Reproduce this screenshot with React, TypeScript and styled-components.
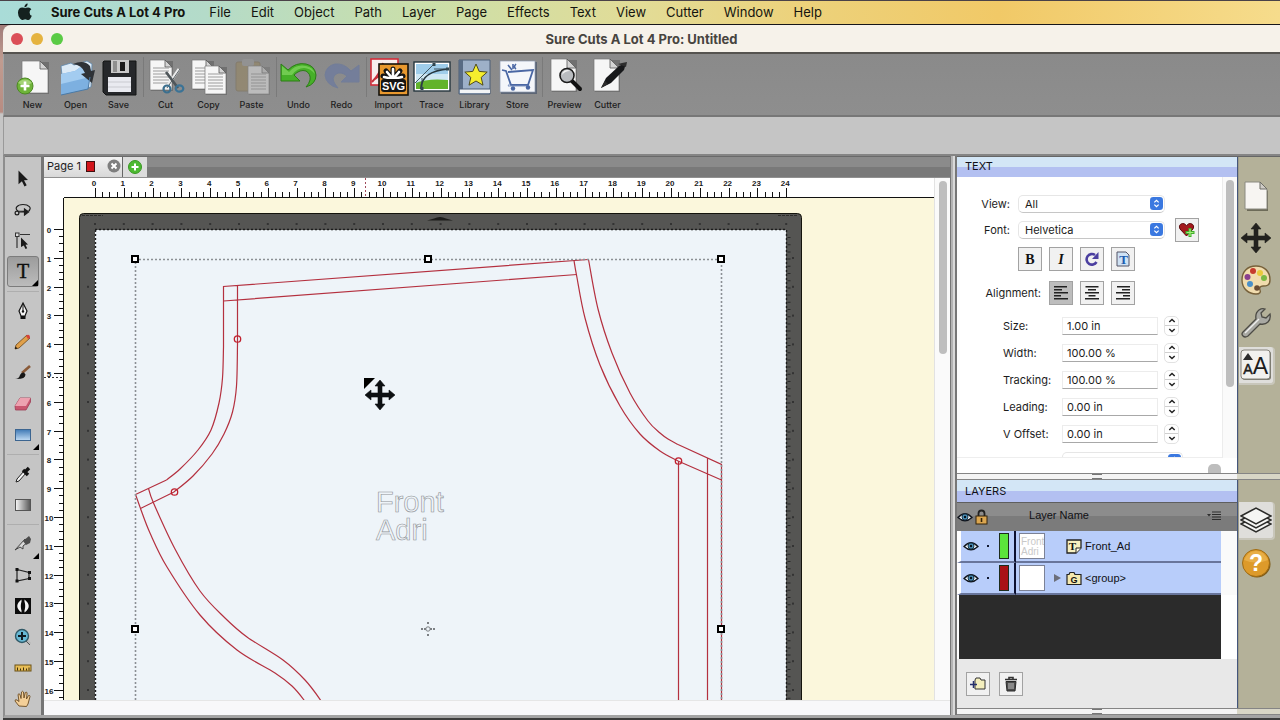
import React from 'react';
import styled, { createGlobalStyle, css } from 'styled-components';

const GlobalStyle = createGlobalStyle`
  * { box-sizing: border-box; }
  body { margin: 0; background: #8e8e8e; font-family: Inter, "Liberation Sans", sans-serif; color: #1c1c1c; }
  button { font: inherit; color: inherit; padding: 0; border: 0; background: none; }
  svg { display: block; }
`;

/* ---------- frame ---------- */

const Screen = styled.div`
  display: flex;
  flex-direction: column;
  height: 100vh;
  min-height: 640px;
  overflow: hidden;
  background: linear-gradient(#a07c78 25px, #c09c90 60px, #b78c82 112px, #c6c6c6 114px);
`;

const MenuBar = styled.nav`
  flex: none;
  display: flex;
  align-items: center;
  height: 25px;
  padding: 0 0 2px 17px;
  border-top: 1px solid #4a4248;
  border-bottom: 1px solid #16161a;
  background: linear-gradient(90deg, #a9dcd8 0%, #b4dbc9 16%, #c9dfab 32%, #e2dc97 50%, #ecd27c 62%, #f1c967 78%, #f6dc8c 100%);
`;

const AppleButton = styled.button`
  width: 15px;
  height: 18px;
  margin-right: 11px;
`;

const MenuItem = styled.button<{ $bold?: boolean }>`
  padding: 0 8px;
  margin-right: ${(p) => (p.$bold ? 8 : 4)}px;
  font-size: 13px;
  line-height: 20px;
  font-weight: ${(p) => (p.$bold ? 700 : 400)};
  color: #14140f;
  white-space: nowrap;
`;

const Window = styled.main`
  flex: 1;
  min-height: 0;
  display: flex;
  flex-direction: column;
  margin-left: 3px;
  border-radius: 8px 0 0 0;
  overflow: hidden;
  background: #8e8e8e;
  border-bottom: 2px solid #3c3c3c;
`;

const TitleBar = styled.header`
  flex: none;
  display: grid;
  grid-template-columns: 1fr auto 1fr;
  align-items: center;
  height: 29px;
  padding: 0 8px;
  background: #f6f2ea;
  border-bottom: 2px solid #55534f;
`;

const Lights = styled.div`
  display: flex;
  gap: 8px;
`;

const Light = styled.button<{ $color: string }>`
  width: 12px;
  height: 12px;
  border-radius: 50%;
  background: ${(p) => p.$color};
`;

const Title = styled.h1`
  margin: 0;
  font-size: 13px;
  line-height: 18px;
  font-weight: 700;
  color: #47443f;
`;

/* ---------- top toolbar ---------- */

const Toolbar = styled.div`
  flex: none;
  display: flex;
  height: 63px;
  padding: 3px 0 0 7px;
  border-left: 1px solid #a4a4a4;
  border-bottom: 2px solid #777;
  background: linear-gradient(#8a8a8a, #8e8e8e);
`;

const ToolGroup = styled.div`
  display: flex;
  & + & { margin-left: 4px; }
  & + &::before {
    content: '';
    width: 1px;
    height: 40px;
    margin-left: -1px;
    background: #7a7a7a;
  }
`;

const ToolbarButton = styled.button`
  display: flex;
  flex-direction: column;
  align-items: center;
  gap: 2px;
  width: 43px;
  font-size: 9px;
  line-height: 12px;
  font-weight: 500;
  color: #1e1e1e;
  &:disabled { color: #1e1e1e; }
`;

const OptionsBar = styled.div`
  flex: none;
  height: 39px;
  background: #c5c5c5;
  border-left: 1px solid #9a9a9a;
  border-bottom: 2px solid #858585;
`;

const Body = styled.div`
  flex: 1;
  min-height: 0;
  display: flex;
  border-left: 2px solid #8e8e8e;
  border-bottom: 3px solid #a4a4a4;
`;

/* ---------- left tools ---------- */

const ToolColumn = styled.div`
  flex: none;
  display: flex;
  flex-direction: column;
  align-items: center;
  width: 39px;
  padding-top: 6px;
  background: #c5c5c5;
  border-right: 3px solid #757575;
  border-top: 1px solid #777;
`;

const ToolButton = styled.button<{ $active?: boolean; $more?: boolean }>`
  position: relative;
  flex: none;
  display: grid;
  place-items: center;
  width: 32px;
  height: 31px;
  border-radius: 3px;
  ${(p) => p.$active && css`
    background: linear-gradient(#9c9c9c, #bcbcbc);
    border: 1px solid #7c7c7c;
  `}
  ${(p) => p.$more && css`
    &::after {
      content: '';
      position: absolute;
      right: 0;
      bottom: 0;
      border: 3px solid #000;
      border-left-color: transparent;
      border-top-color: transparent;
    }
  `}
`;

const ToolRule = styled.hr`
  flex: none;
  width: 32px;
  height: 1px;
  margin: 4px 0 3px;
  border: 0;
  background: #aeaeae;
`;

/* ---------- document ---------- */

const Document = styled.section`
  flex: 1;
  min-width: 0;
  display: flex;
  flex-direction: column;
  background: #f9f9fa;
`;

const TabStrip = styled.div`
  flex: none;
  display: flex;
  height: 22px;
  border-top: 1px solid #6a6a6a;
  border-bottom: 1px solid #909090;
  background: linear-gradient(#8b8b8b 50%, #797979 50%);
`;

const PageTab = styled.div`
  display: flex;
  align-items: center;
  width: 79px;
  padding: 0 0 2px 3px;
  border-right: 1px solid #666;
  background: linear-gradient(#f2f2f2, #d8d8d8);
`;

const TabName = styled.button`
  display: flex;
  align-items: center;
  gap: 5px;
  font-size: 11px;
  line-height: 16px;
  white-space: nowrap;
`;

const Swatch = styled.span`
  width: 9px;
  height: 11px;
  border: 1px solid #401010;
  background: #d2151b;
`;

const TabClose = styled.button`
  margin: 0 1px 0 auto;
`;

const TabAdd = styled.button`
  display: grid;
  place-items: center;
  width: 24px;
  background: #dcdcdc;
`;

const CanvasGrid = styled.div`
  flex: 1;
  min-height: 0;
  display: grid;
  grid-template-columns: 20px 1fr 16px;
  grid-template-rows: 20px 1fr 15px;
`;

const Corner = styled.div`
  background: #fff;
`;

const RulerTop = styled.div`
  min-width: 0;
  overflow: hidden;
  background: #fff;
  border-bottom: 1px solid #111;
`;

const RulerLeft = styled.div`
  min-height: 0;
  overflow: hidden;
  background: #fff;
  border-right: 1px solid #111;
`;

const Workspace = styled.div`
  min-width: 0;
  min-height: 0;
  overflow: hidden;
  background: #fbf7dc;
`;

const VScroll = styled.div`
  grid-column: 3;
  grid-row: 1 / span 2;
  display: flex;
  justify-content: center;
  padding-top: 3px;
  border-left: 1px solid #e2e2e2;
  background: #fafafa;
`;

const Thumb = styled.div<{ $h: number }>`
  width: 8px;
  height: ${(p) => p.$h}px;
  border-radius: 4px;
  background: #bebebe;
`;

const BottomTrack = styled.div`
  grid-column: 1 / -1;
  border-top: 1px solid #e6e6e6;
  background: #f8f8fa;
`;

const SplitBar = styled.div`
  flex: none;
  width: 7px;
  background: linear-gradient(90deg, #777 0 1px, #b4b4b4 1px 3px, #d9d9d9 3px 5px, #777 5px 7px);
`;

/* ---------- right docks ---------- */

const Docks = styled.aside`
  flex: none;
  display: flex;
  flex-direction: column;
  width: 323px;
  border-top: 1px solid #666;
`;

const Dock = styled.section<{ $grow?: boolean }>`
  display: grid;
  grid-template-columns: 281px 1fr;
  min-height: 0;
  flex: ${(p) => (p.$grow ? 1 : 'none')};
`;

const DockPanel = styled.div`
  display: flex;
  flex-direction: column;
  min-height: 0;
  border-right: 1px solid #44567c;
  background: #fff;
`;

const DockTitle = styled.h2<{ $tall?: boolean }>`
  flex: none;
  margin: 0;
  height: ${(p) => (p.$tall ? 22 : 20)}px;
  padding-left: 8px;
  font-size: 11px;
  line-height: ${(p) => (p.$tall ? 22 : 18)}px;
  font-weight: 400;
  color: #101018;
  background: linear-gradient(#d3e6f6 50%, #b3c0f1 50%);
`;

const DockRail = styled.div`
  display: flex;
  flex-direction: column;
  align-items: flex-start;
  padding-top: 18px;
  background: #b4b199;
  border-left: 1px solid #9e9c88;
`;

const RailButton = styled.button<{ $active?: boolean }>`
  display: grid;
  place-items: center;
  width: 34px;
  height: 42px;
  ${(p) => p.$active && css`
    width: 36px;
    height: 38px;
    margin: 4px 0 2px;
    background: #dfdedb;
    border-radius: 0 4px 4px 0;
    border-right: 2px solid #c8c6ba;
    border-bottom: 2px solid #c8c6ba;
  `}
`;

const Splitter = styled.div`
  flex: none;
  display: grid;
  grid-template-columns: 280px 1fr;
  height: 7px;
  border-top: 1px solid #858585;
  border-bottom: 1px solid #858585;
  background: #d8d6c6;
`;

const Grip = styled.div`
  display: grid;
  place-items: center;
  background: #f4f4f4;
  &::after {
    content: '';
    width: 10px;
    height: 3px;
    border-top: 1px solid #777;
    border-bottom: 1px solid #777;
  }
`;

const FormArea = styled.div`
  display: grid;
  grid-template-columns: 1fr 15px;
  height: 296px;
`;

const Form = styled.form`
  display: flex;
  flex-direction: column;
  height: 281px;
  padding-top: 14px;
  overflow: hidden;
  font-size: 11px;
  border-bottom: 1px solid #eee;
`;

const FormTrack = styled.div`
  display: flex;
  justify-content: center;
  padding-top: 3px;
  border-left: 1px solid #ececec;
  background: #fafafa;
`;

const HTrack = styled.div`
  grid-column: 1 / -1;
  display: flex;
  justify-content: flex-end;
  padding: 6px 16px 0 0;
  overflow: hidden;
`;

const HThumb = styled.div`
  width: 13px;
  height: 9px;
  border-radius: 5px 5px 0 0;
  background: #bdbdbd;
`;

const FormRow = styled.div<{ $h: number; $indent?: number }>`
  flex: none;
  display: flex;
  align-items: center;
  height: ${(p) => p.$h}px;
  padding-left: ${(p) => p.$indent ?? 0}px;
`;

const labelText = css`
  flex: none;
  line-height: 16px;
  white-space: nowrap;
`;

const MenuLabel = styled.label`
  ${labelText}
  width: 53px;
  margin-right: 8px;
  text-align: right;
`;

const GroupLabel = styled.span`
  ${labelText}
  width: 84px;
  margin-right: 8px;
  text-align: right;
`;

const FieldLabel = styled.label`
  ${labelText}
  width: 59px;
`;

const SelectBox = styled.div<{ $w: number }>`
  position: relative;
  width: ${(p) => p.$w}px;
  svg { position: absolute; right: 2px; top: 2px; pointer-events: none; }
`;

const Select = styled.select`
  appearance: none;
  display: block;
  width: 100%;
  height: 18px;
  padding: 0 6px;
  border: 1px solid #e6e6e6;
  border-bottom-color: #c6c6c6;
  border-radius: 5px;
  background: #fff;
  font: 11px/16px Inter, sans-serif;
  color: #1c1c1c;
`;

const SquareButton = styled.button<{ $active?: boolean }>`
  display: grid;
  place-items: center;
  width: 24px;
  height: 24px;
  border: 1px solid #a2a2a2;
  background: ${(p) => (p.$active ? '#bdbdbd' : '#f1f1f1')};
`;

const ButtonRow = styled.div`
  display: flex;
  gap: 7px;
`;

const HeartSlot = styled.div`
  margin-left: 10px;
`;

const NumberInput = styled.input`
  width: 96px;
  height: 18px;
  padding: 0 4px;
  border: 1px solid #ececec;
  border-bottom-color: #a8a8a8;
  background: #fff;
  font: 11px/16px Inter, sans-serif;
  color: #1c1c1c;
`;

const Stepper = styled.div`
  display: flex;
  flex-direction: column;
  width: 15px;
  height: 20px;
  margin-left: 6px;
  border: 1px solid #e2e2e2;
  border-radius: 5px;
`;

const StepButton = styled.button`
  flex: 1;
  display: grid;
  place-items: center;
  & + & { border-top: 1px solid #d0d0d0; }
`;

/* ---------- layers ---------- */

const LayerTable = styled.table`
  flex: none;
  width: 100%;
  table-layout: fixed;
  border-collapse: separate;
  border-spacing: 0;
  font: 11px/14px "Liberation Sans", Arial, sans-serif;
  color: #101014;
  td, th { padding: 0; font-weight: 400; text-align: left; }
`;

const Column = styled.col<{ $w?: number }>`
  width: ${(p) => (p.$w ? `${p.$w}px` : 'auto')};
`;

const HeadRow = styled.tr`
  height: 29px;
  background: linear-gradient(#5f5f5f 1px, #8c8c8c 1px 50%, #7b7b7b 50%);
`;

const HeadIcons = styled.div`
  display: flex;
  align-items: center;
  gap: 2px;
`;

const HeadName = styled.th`
  && { padding-left: 13px; padding-bottom: 3px; }
`;

const HeadNameBar = styled.div`
  display: flex;
  align-items: center;
  justify-content: space-between;
`;

const LayerRow = styled.tr`
  height: 32px;
  background: #b8cdfa;
`;

const Cell = styled.td`
  vertical-align: middle;
  border-bottom: 2px solid #68759b;
`;

const EyeCell = styled.td`
  vertical-align: middle;
  border-left: 4px solid #fff;
  border-bottom: 2px solid #68759b;
`;

const EyeToggle = styled.button`
  display: block;
  margin-left: 2px;
`;

const GutterCell = styled.td`
  background: #fafafa;
`;

const ColorCell = styled.td`
  vertical-align: middle;
  border-right: 2px solid #0c1030;
  border-bottom: 2px solid #68759b;
`;

const ColorBar = styled.div<{ $color: string }>`
  width: 10px;
  height: 26px;
  margin-left: 3px;
  border: 1px solid #1c2c1c;
  background: ${(p) => p.$color};
`;

const Dot = styled.div`
  width: 2px;
  height: 2px;
  margin-left: 3px;
  background: #101830;
`;

const Preview = styled.div`
  width: 26px;
  height: 26px;
  margin-left: 3px;
  overflow: hidden;
  border: 1px solid #7c8296;
  background: #fff;
  font: 10px/10px "Liberation Sans", Arial, sans-serif;
  color: #c9c9c9;
  padding: 3px 0 0 1px;
`;

const LayerName = styled.div`
  display: flex;
  align-items: center;
  gap: 3px;
  white-space: nowrap;
`;

const Twirl = styled.span`
  width: 13px;
  padding-left: 3px;
`;

const EmptyList = styled.div`
  flex: none;
  height: 64px;
  margin: 0 16px 0 2px;
  background: #2b2b2b;
`;

const LayerActions = styled.div`
  flex: 1;
  display: flex;
  gap: 9px;
  padding: 13px 9px 0;
  background: #e8e8e8;
`;

/* ---------- top toolbar icons (40 x 40) ---------- */

const Big = ({ children }: { children: React.ReactNode }) => (
  <svg width="40" height="40" viewBox="0 0 40 40" fill="none">{children}</svg>
);

const Sheet = ({ x, y, w, h, f = 7, lines }: { x: number; y: number; w: number; h: number; f?: number; lines?: boolean }) => (
  <g>
    <path d={`M${x + 1} ${y + 1}h${w}v${h}h${-w}z`} fill="#555" opacity=".5" />
    <path d={`M${x} ${y}h${w - f}l${f} ${f}v${h - f}h${-w}z`} fill="#f6f6f6" stroke="#777" strokeWidth=".7" />
    <path d={`M${x + w - f} ${y}v${f}h${f}z`} fill="#d4d4d4" stroke="#555" strokeWidth=".8" />
    {lines && <path d={[8, 11, 14, 17, 20, 23].map((d) => `M${x + 3} ${y + d}h${w - 6}`).join('')} stroke="#9c9c9c" strokeWidth="1" />}
  </g>
);

const NewIcon = () => (
  <Big>
    <Sheet x={9} y={4} w={26} h={32} f={8} />
    <circle cx="12" cy="29" r="8" fill="#6fb43a" stroke="#4c8a22" />
    <path d="M5 26a8 7 0 0 1 14 0q-7 4-14 0z" fill="#b9e08e" opacity=".7" />
    <path d="M12 24.500v9M7.500 29h9" stroke="#fff" strokeWidth="2.600" />
  </Big>
);

const OpenIcon = () => (
  <Big>
    <path d="M5 9l10-3 3 2 13-4 5 3-1 23-27 7z" fill="#dceaf6" stroke="#5d86ac" strokeWidth=".8" />
    <path d="M5 17l14-3 7-5 9 4-3 19-27 6z" fill="#7db0e0" />
    <path d="M5 17l14-3 7-5 9 4-1 7-29 7z" fill="#a3ccf0" />
    <path d="M17 7Q28 2 34 9l1 5 4-1-3 13-11-9 4-1q-3-8-12-9z" fill="#2e3237" />
    <path d="M5 38l27-6 2-12" stroke="#4b7aa6" />
  </Big>
);

const SaveIcon = () => (
  <Big>
    <path d="M5 4h32v34H7l-3-3V5z" fill="#26282b" stroke="#131415" />
    <rect x="12" y="3" width="18" height="13" fill="#c9c9c9" />
    <rect x="21" y="5" width="5" height="9" fill="#1b1b1b" />
    <path d="M14 4h4v11h-4z" fill="#8f8f8f" />
    <rect x="9" y="20" width="23" height="15" fill="#e9eaf0" />
    <path d="M9 25h23M9 30h23" stroke="#c9cad0" />
  </Big>
);

const CutIcon = () => (
  <Big>
    <Sheet x={4} y={3} w={22} h={30} lines />
    <path d="M33 12L20 31" stroke="#ececec" strokeWidth="3" />
    <path d="M34 12L21 31" stroke="#5c6468" strokeWidth="1" />
    <path d="M20 15l12 16" stroke="#4f565a" strokeWidth="2.600" />
    <circle cx="21" cy="32" r="3.500" stroke="#3b6f8e" strokeWidth="2.200" />
    <ellipse cx="33.500" cy="31.500" rx="3.800" ry="3.200" stroke="#3b7396" strokeWidth="2.200" />
  </Big>
);

const CopyIcon = () => (
  <Big>
    <Sheet x={3} y={3} w={21} h={29} lines />
    <Sheet x={16} y={9} w={21} h={28} lines />
  </Big>
);

const PasteIcon = () => (
  <Big>
    <g opacity=".45">
      <rect x="4" y="5" width="24" height="29" rx="2" fill="#9a8556" stroke="#7a6a48" />
      <rect x="10" y="2" width="12" height="7" rx="2" fill="#9c9c9c" />
      <Sheet x={16} y={9} w={21} h={28} lines />
    </g>
  </Big>
);

const UndoIcon = () => (
  <Big>
    <path d="M2 7v17h19l-6-6q6-6 12-4 5 3 4 9-1 4-4 7 10-3 10-12-1-9-10-11-10-2-18 6z" fill="#46b028" stroke="#2d7c17" strokeWidth="1" />
    <path d="M3 9l7 6Q17 7 27 9q7 1 9 8-5-6-11-6-7 0-12 7H3z" fill="#8ede6a" opacity=".6" />
  </Big>
);

const RedoIcon = () => (
  <Big>
    <path d="M37 8v17H19l6-6q-6-5-11-2-5 4-1 10l3 4Q4 28 3 18 4 9 13 7q9-1 16 7z" fill="#6878a2" stroke="#6677a0" opacity=".65" />
  </Big>
);

const ImportIcon = () => (
  <Big>
    <rect x="2" y="2" width="27" height="26" fill="#f6eded" stroke="#d22d3a" strokeWidth="1.600" />
    <path d="M3 25q8-8 11-19M6 22q6-6 20-4" stroke="#c52f3a" strokeWidth="2" />
    <rect x="10" y="7" width="29" height="31" fill="#e8982e" stroke="#15120c" strokeWidth="1.600" />
    <g stroke="#141414" strokeWidth="5" strokeLinecap="round">
      <path d="M24 22V12M24 22l-7-8M24 22l7-8M24 22l-10-3M24 22l10-3" />
    </g>
    <g stroke="#fff" strokeWidth="2.600" strokeLinecap="round">
      <path d="M24 22V12M24 22l-6-7M24 22l6-7M24 22l-9-2M24 22l9-2" />
    </g>
    <rect x="12" y="22" width="25" height="13" rx="3" fill="#141414" />
    <text x="24.500" y="33" textAnchor="middle" fontFamily="Liberation Sans, sans-serif" fontWeight="700" fontSize="11" fill="#fff">SVG</text>
  </Big>
);

const TraceIcon = () => (
  <Big>
    <rect x="2" y="5" width="36" height="29" fill="#fff" stroke="#26363e" strokeWidth="1.400" />
    <rect x="4" y="7" width="32" height="25" fill="#9fcdea" />
    <path d="M4 17h32v8H4z" fill="#cfe8f4" />
    <path d="M4 26q12-5 32-3v9H4z" fill="#62b32a" />
    <path d="M9 32q0-18 28-20" stroke="#26363e" strokeWidth="1.600" />
    <path d="M3 26L22 7M22 12h15M10 21v12" stroke="#33464f" strokeWidth=".9" />
    <path d="M20.500 6h3v3h-3zM34 10.500h3v3h-3zM8.500 30h3v3h-3z" fill="#33464f" />
  </Big>
);

const LibraryIcon = () => (
  <Big>
    <path d="M4 3h31v34H4z" fill="#9db0c8" stroke="#4d5f76" />
    <path d="M4 3h4v29H4z" fill="#586b84" />
    <path d="M5 32h30v4H5z" fill="#f2f4f6" />
    <path d="M4 32h31" stroke="#4d5f76" />
    <path d="M21 7l3.200 7.400 8 .7-6 5.300 1.800 7.800-7-4.200-7 4.200 1.800-7.800-6-5.300 8-.7z" fill="#f6ee2e" stroke="#4e4c20" strokeWidth="1" />
  </Big>
);

const StoreIcon = () => (
  <Big>
    <rect x="3" y="5" width="36" height="32" fill="#3e4c66" opacity=".6" />
    <rect x="2" y="4" width="35" height="31" fill="#f4f6fa" stroke="#8b97ae" strokeWidth=".7" />
    <path d="M4 13l4 1 5 14h17l5-15-25 2" stroke="#4a67a4" strokeWidth="1.800" />
    <path d="M12 26l-2 3h21" stroke="#7d93c0" strokeWidth="1" />
    <circle cx="15" cy="31.500" r="2.200" fill="#4a67a4" />
    <circle cx="30" cy="30.500" r="2.200" fill="#4a67a4" />
    <path d="M10 8l4 5M15 7v5M18 7q-3 3 0 5" stroke="#4a67a4" strokeWidth="1.600" />
  </Big>
);

const PreviewIcon = () => (
  <Big>
    <Sheet x={6} y={2} w={25} h={32} f={9} />
    <path d="M27 24l8 8" stroke="#111" strokeWidth="4" strokeLinecap="round" />
    <circle cx="22" cy="18.500" r="7" fill="#b9bcc0" stroke="#1c1c1c" strokeWidth="1.600" />
    <path d="M17 18a5 5 0 0 1 8-4q-5 0-8 4z" fill="#f2f2f2" />
  </Big>
);

const CutterIcon = () => (
  <Big>
    <Sheet x={6} y={2} w={25} h={32} f={9} />
    <path d="M13 31l5-10L31 9l7-3-2 7-13 13z" fill="#17181a" />
    <path d="M13 31l4-7 3 3zM30 7l4-1 5-1-1 5" fill="#2d2d2d" />
  </Big>
);

/* ---------- left tool icons (20 x 20) ---------- */

const Mid = ({ children }: { children: React.ReactNode }) => (
  <svg width="20" height="20" viewBox="0 0 20 20" fill="none">{children}</svg>
);

const tools: Record<string, React.ReactNode> = {
  Select: <path d="M5.500 1.500l9.500 9.500-4 .3 2.700 5-2.200 1.200-2.600-5.200-3.400 3z" fill="#1a1a1a" />,
  Lasso: <g stroke="#1e1e1e" strokeWidth="1.200"><path d="M5 11C1 8.500 4 4.500 10 4.500S19 8 16 10.500M5 11q9 1 12-.5" /><circle cx="4" cy="13" r="1.900" /><path d="M6 12l5 0M11.500 9v6l4-3z" fill="#1e1e1e" /></g>,
  'Edit points': <g><path d="M4 6v11M7 3.500h10" stroke="#333" strokeWidth="1.200" /><rect x="2.500" y="2" width="3.500" height="3.500" stroke="#333" fill="#ddd" /><path d="M8 6.500l7 7-2.500.2 1.700 3.600-1.700.8-1.700-3.700L8 16z" fill="#1a1a1a" /></g>,
  Text: <text x="10" y="15.500" textAnchor="middle" fontFamily="Liberation Serif, serif" fontSize="20" fill="#0e0e0e" stroke="#0e0e0e" strokeWidth=".4">T</text>,
  Pen: <g><path d="M10 2l4 8-2 5H8l-2-5z" fill="#f4f4f4" stroke="#111" strokeWidth="1.200" /><path d="M10 3v7" stroke="#111" /><circle cx="10" cy="10.500" r="1.200" fill="#111" /><path d="M7.500 15h5v3h-5z" fill="#111" /></g>,
  Pencil: <g><path d="M2 17l1-4L14 3l3 3L6 16z" fill="#e0a04a" stroke="#6b4518" strokeWidth=".8" /><path d="M14 3q3-1 3 3l-2 1-2-3z" fill="#d5443c" /><path d="M2 17l.5-2.500 2 2z" fill="#111" /></g>,
  Brush: <g><path d="M17 3l-8 7" stroke="#8a5a38" strokeWidth="2.600" /><path d="M2 16q4 0 5-4 1-3 4-2.500l1.500 2q0 5-10.500 4.500z" fill="#171717" /></g>,
  Eraser: <g><path d="M2 12l5-8h10.500v4L13 16H2.500z" fill="#c9566f" stroke="#9c3c54" strokeWidth=".8" /><path d="M7 4h10.500L13 12H2z" fill="#eda2b0" /></g>,
  Shape: <g><defs><linearGradient id="blue" x1="0" y1="0" x2="0" y2="1"><stop offset="0" stopColor="#3f79b5" /><stop offset="1" stopColor="#c2dcf4" /></linearGradient></defs><rect x="2.500" y="4.500" width="15" height="11" fill="url(#blue)" stroke="#3c6590" /></g>,
  Eyedropper: <g><path d="M3 18l1-3 7-8 2 2-7 8z" fill="#f5f5f5" stroke="#222" /><path d="M10 6l5 5M12 8l4-4" stroke="#111" strokeWidth="3.400" /></g>,
  Gradient: <g><defs><linearGradient id="grey" x1="0" y1="0" x2="1" y2="0"><stop offset="0" stopColor="#fafafa" /><stop offset="1" stopColor="#555" /></linearGradient></defs><rect x="2.500" y="4.500" width="15" height="11" fill="url(#grey)" stroke="#555" /></g>,
  Knife: <g><path d="M2 16L12 5l3 3-5 4v3l-3-2z" fill="#d8d8d8" stroke="#444" /><path d="M10 7l6-5 2 3-1 4-4 2z" fill="#4c4c4c" /></g>,
  Distort: <g><path d="M4 4.500l12 3v6L4 16z" stroke="#222" strokeWidth="1.200" /><path d="M2.500 3h3v3h-3zM15 6h3v3h-3zM15 12h3v3h-3zM2.500 14.500h3v3h-3z" fill="#111" /></g>,
  Split: <g><rect x="2" y="2" width="16" height="16" fill="#0c0c0c" /><path d="M8.500 3.500Q0 10 8.500 16.500zM11.500 3.500Q20 10 11.500 16.500z" fill="#f4f4f4" /><ellipse cx="10" cy="10" rx="2.200" ry="4.500" fill="#0c0c0c" /></g>,
  Zoom: <g><path d="M12 12l5 5" stroke="#b8b8b8" strokeWidth="3" /><path d="M13 14l4 4" stroke="#555" /><circle cx="9" cy="9" r="6.500" fill="#67b8d4" stroke="#305866" strokeWidth="1.400" /><path d="M9 5v8M5 9h8" stroke="#101a20" strokeWidth="2" /></g>,
  Measure: <g><rect x="2" y="7" width="16" height="6" fill="#e7bd56" stroke="#6d5216" /><path d="M4.500 9.500v3M7.500 10.500v2M10.500 9.500v3M13.500 10.500v2M16 9.500v3" stroke="#3f2f0c" /></g>,
  Hand: <path d="M6 17l-4-5q0-2 2-1l2 1.500L5 5.500q1-1.500 2 0l1 4L8.500 3q1-1.500 2 0l.5 6 1.300-5.500q1.500-1 1.800.5L13.500 10l2-3.500q1.500-.5 1.500 1L15 15l-1.500 2.500z" fill="#f3cf98" stroke="#6b4b20" strokeWidth=".9" />,
};

const toolGroups: string[][] = [
  ['Select', 'Lasso', 'Edit points', 'Text'],
  ['Pen', 'Pencil', 'Brush', 'Eraser', 'Shape'],
  ['Eyedropper', 'Gradient'],
  ['Knife', 'Distort', 'Split', 'Zoom', 'Measure', 'Hand'],
];
const withMore = ['Text', 'Shape', 'Knife'];

/* ---------- other small icons ---------- */

const AppleLogo = () => (
  <svg width="15" height="18" viewBox="1 1 13 16" fill="#14211f">
    <path d="M10.300 1.500q.1 1.400-.8 2.400-.9 1-2.100.9-.1-1.300.8-2.300.9-1 2.100-1zM13.600 6.600q-1.600 1-1.600 2.800 0 2.100 2 3-.5 1.400-1.400 2.600-.8 1.100-1.700 1.100-.6 0-1.300-.3-.7-.4-1.500-.4t-1.500.4q-.7.300-1.200.3-.9 0-1.900-1.300Q1.700 12.500 1.700 9.600q0-2.100 1.100-3.400 1.100-1.300 2.700-1.300.8 0 1.600.4.600.3.900.3.300 0 1-.3.900-.4 1.800-.4 1.800 0 2.800 1.700z" />
  </svg>
);

const SelectKnob = () => (
  <svg width="13" height="13" viewBox="0 0 12 12">
    <rect width="12" height="12" rx="3" fill="#3a78e0" />
    <path d="M4 5l2-2 2 2M4 7l2 2 2-2" fill="none" stroke="#fff" strokeWidth="1.100" />
  </svg>
);

const Chevron = ({ up }: { up?: boolean }) => (
  <svg width="8" height="5" viewBox="0 0 8 5">
    <path d={up ? 'M1.300 4L4 1.500 6.700 4' : 'M1.300 1L4 3.500 6.700 1'} fill="none" stroke="#222" strokeWidth="1.500" />
  </svg>
);

const EyeIcon = () => (
  <svg width="16" height="10" viewBox="0 0 16 10">
    <path d="M1 5.500Q8-2 15 5.500 8 12 1 5.500z" fill="#f2f8fc" stroke="#10141c" strokeWidth="1.300" />
    <circle cx="8" cy="5" r="3" fill="#4b90b8" stroke="#1b3a50" />
    <circle cx="8" cy="5" r="1.200" fill="#081018" />
  </svg>
);

const LockIcon = () => (
  <svg width="13" height="16" viewBox="0 0 13 16">
    <path d="M3.500 8V4.500Q3.500 1.500 6.500 1.500t3 3V8" fill="none" stroke="#222" strokeWidth="1.800" />
    <rect x="1" y="7" width="11" height="8" fill="#dba650" stroke="#33230a" />
    <path d="M6.500 9v4" stroke="#33230a" strokeWidth="1.600" />
  </svg>
);

const AlignIcon = ({ mode }: { mode: 'left' | 'center' | 'right' }) => {
  const widths = [13, 8, 14, 7, 14];
  return (
    <svg width="14" height="14" viewBox="0 0 14 14">
      {widths.map((w, i) => (
        <rect key={i} x={mode === 'left' ? 0 : mode === 'right' ? 14 - w : (14 - w) / 2} y={i * 3} width={w} height="1.500" fill="#222" />
      ))}
    </svg>
  );
};

const Rail = ({ children }: { children: React.ReactNode }) => (
  <svg width="32" height="32" viewBox="0 0 32 32" fill="none">{children}</svg>
);

const MoveArrows = ({ fill }: { fill: string }) => (
  <path d="M16 1l5 6h-3v7h7v-3l6 5-6 5v-3h-7v7h3l-5 6-5-6h3v-7H7v3l-6-5 6-5v3h7V7h-3z" fill={fill} stroke={fill} strokeWidth=".6" />
);

/* ---------- drawing ---------- */

const UNIT = 28.8;
const quarters = (n: number) => Array.from({ length: n * 4 + 1 }, (_, i) => i);

type Point = [number, number];

/* Catmull-Rom spline through the points, as cubic segments. */
const smooth = (pts: Point[]) =>
  pts.slice(1).reduce((d, p, i) => {
    const a = pts[Math.max(i - 1, 0)];
    const b = pts[i];
    const c = pts[Math.min(i + 2, pts.length - 1)];
    return `${d}C${b[0] + (p[0] - a[0]) / 6} ${b[1] + (p[1] - a[1]) / 6} ${p[0] - (c[0] - b[0]) / 6} ${p[1] - (c[1] - b[1]) / 6} ${p[0]} ${p[1]}`;
  }, `M${pts[0][0]} ${pts[0][1]}`);

const outlines = [
  'M223.500 347V286.500L588.500 259.500M223.500 301L577 274.500M237.500 345V285.500',
  'M166.500 480L135.500 494.500L140.500 508.500L174 492',
  'M678 444.500L721.500 464.500V720M678 461L721.500 480M678.500 461V720M707.500 458.500V720',
  smooth([[223.5, 347], [222.5, 378], [219, 403], [211, 430], [198, 450], [180, 469], [166.5, 480]]),
  smooth([[237.5, 345], [236.5, 386], [232.5, 412], [224, 434], [212, 454], [193, 476], [174, 492]]),
  smooth([[140.5, 508.5], [150, 533], [167, 567], [200, 615], [237, 650], [275, 673], [292, 686], [304, 700], [310, 710]]),
  smooth([[148.5, 488.5], [153.5, 503], [175, 549], [200, 591], [225, 618], [247, 637], [283, 660], [305, 680], [320.5, 700], [326, 710]]),
  smooth([[574, 260.5], [576.5, 275], [585, 318], [600, 365], [620, 406], [640, 434], [660, 451], [678, 461]]),
  smooth([[588.5, 259.5], [598, 309], [612, 353], [630, 393], [648, 421], [660, 433], [668, 439], [678, 444.5]]),
];

const handles: Point[] = [[135, 259], [428, 259], [721, 259], [135, 629], [721, 629]];
const notches: Point[] = [[237.5, 339], [174.5, 492], [678.5, 461]];

const TopRuler = () => (
  <svg width="100%" height="19">
    <g fontFamily="Liberation Sans, sans-serif" fontWeight="700" fontSize="8" textAnchor="middle" fill="#222">
      {quarters(24).map((i) => (
        <line key={i} x1={Math.round(31 + (i * UNIT) / 4) + 0.5} x2={Math.round(31 + (i * UNIT) / 4) + 0.5} y1={i % 4 ? 14 : 10} y2="19" stroke="#111" />
      ))}
      {Array.from({ length: 25 }, (_, i) => <text key={i} x={30 + i * UNIT} y="8">{i}</text>)}
    </g>
    <path d="M301.500 0v19" stroke="#a04a5a" strokeDasharray="2 2" />
  </svg>
);

const LeftRuler = () => (
  <svg width="19" height="100%">
    <g fontFamily="Liberation Sans, sans-serif" fontWeight="700" fontSize="8" textAnchor="middle" fill="#222">
      {quarters(17).map((i) => (
        <line key={i} y1={Math.round(31 + (i * UNIT) / 4) + 0.5} y2={Math.round(31 + (i * UNIT) / 4) + 0.5} x1={i % 4 ? 15 : 10} x2="19" stroke="#111" />
      ))}
      {Array.from({ length: 17 }, (_, i) => <text key={i} x="5" y={35 + i * UNIT}>{i}</text>)}
    </g>
    <path d="M0 179.500h19" stroke="#333" strokeDasharray="2 2" />
  </svg>
);

const Drawing = () => (
  <svg width="100%" height="100%">
    <g transform="translate(-64 -198)" fill="none">
      <rect x="79.500" y="213.500" width="722" height="720" rx="4" fill="#555553" stroke="#14140c" />
      <rect x="95" y="230" width="691" height="700" fill="#eef4f9" />
      <path d="M427 220.500l7-2q6-3 12 0l7 2z" fill="#1c1c1a" />
      <g stroke="#1b1b1b" strokeDasharray="2 2">
        <path d="M95 229.500h692M95.500 230v500M786.500 230v500" strokeWidth="1.400" />
      </g>
      <g fill="#333">
        {Array.from({ length: 25 }, (_, i) => <rect key={`t${i}`} x={94 + i * UNIT} y="223" width="2" height="2" />)}
        {Array.from({ length: 16 }, (_, i) => (
          <g key={`s${i}`}>
            <rect x="87" y={257 + i * UNIT} width="2" height="2" />
            <rect x="792" y={257 + i * UNIT} width="2" height="2" />
          </g>
        ))}
      </g>
      <path d="M82 215.500h21M778 215.500h19" stroke="#2e2e2c" strokeDasharray="3 1" />
      <path d="M789 237v480" stroke="#2a2a2a" strokeWidth="3" strokeDasharray="1 6.200" />
      <g stroke="#b4303f" strokeWidth="1.200">
        {outlines.map((d) => <path key={d} d={d} />)}
      </g>
      <path d="M135.500 720V259.500H721.500V720" stroke="#8b8f94" strokeWidth="1.600" strokeDasharray="2 2" />
      {notches.map(([x, y]) => <circle key={x} cx={x} cy={y} r="3.200" stroke="#c0202e" strokeWidth="1.300" />)}
      {handles.map(([x, y]) => <rect key={`${x}-${y}`} x={x - 3} y={y - 3} width="6" height="6" fill="#fff" stroke="#000" strokeWidth="2" />)}
      <g fontFamily="Liberation Sans, Arial, sans-serif" fontSize="29" stroke="#8e9296" strokeWidth=".6" fill="none">
        <text x="376" y="511.500">Front</text>
        <text x="376" y="540">Adri</text>
      </g>
      <g fill="#7c8084">
        <circle cx="428" cy="629" r="2.200" fill="none" stroke="#7c8084" />
        <path d="M427 622h2v2h-2zM427 634h2v2h-2zM421 628h2v2h-2zM424 628h2v2h-2zM433 628h2v2h-2zM430 628h2v2h-2z" />
      </g>
      <path d="M364 378h11l-11 11z" fill="#000" />
      <g transform="translate(364 379)"><MoveArrows fill="#0c0f12" /></g>
    </g>
  </svg>
);

/* ---------- application ---------- */

const menus = ['File', 'Edit', 'Object', 'Path', 'Layer', 'Page', 'Effects', 'Text', 'View', 'Cutter', 'Window', 'Help'];

const toolbarGroups: [string, React.ReactNode][][] = [
  [['New', <NewIcon />], ['Open', <OpenIcon />], ['Save', <SaveIcon />]],
  [['Cut', <CutIcon />], ['Copy', <CopyIcon />], ['Paste', <PasteIcon />]],
  [['Undo', <UndoIcon />], ['Redo', <RedoIcon />]],
  [['Import', <ImportIcon />], ['Trace', <TraceIcon />], ['Library', <LibraryIcon />], ['Store', <StoreIcon />]],
  [['Preview', <PreviewIcon />], ['Cutter', <CutterIcon />]],
];

const metrics: [string, string][] = [
  ['Size', '1.00 in'],
  ['Width', '100.00 %'],
  ['Tracking', '100.00 %'],
  ['Leading', '0.00 in'],
  ['V Offset', '0.00 in'],
];

const TextPanel = () => (
  <DockPanel>
    <DockTitle>TEXT</DockTitle>
    <FormArea>
      <Form>
        <FormRow $h={26}>
          <MenuLabel htmlFor="view">View:</MenuLabel>
          <SelectBox $w={147}>
            <Select id="view"><option>All</option></Select>
            <SelectKnob />
          </SelectBox>
        </FormRow>
        <FormRow $h={26}>
          <MenuLabel htmlFor="font">Font:</MenuLabel>
          <SelectBox $w={147}>
            <Select id="font"><option>Helvetica</option></Select>
            <SelectKnob />
          </SelectBox>
          <HeartSlot>
            <SquareButton type="button" aria-label="Add to favourites">
              <svg width="18" height="18" viewBox="0 0 18 18">
                <path d="M8.500 15L2 8Q0 3.500 4.500 2.500 7 2 8.500 5 10 2 12.500 2.500 17 3.500 15 8z" fill="#a3191c" stroke="#5d0b0d" />
                <path d="M12 7v9M7.500 11.500h9" stroke="#3fae2a" strokeWidth="3" />
                <path d="M12 8v7M8.500 11.500h7" stroke="#a6ee7a" strokeWidth="1.200" />
              </svg>
            </SquareButton>
          </HeartSlot>
        </FormRow>
        <FormRow $h={32} $indent={61}>
          <ButtonRow>
            <SquareButton type="button" aria-label="Bold">
              <svg width="16" height="16"><text x="8" y="12.500" textAnchor="middle" fontFamily="Liberation Serif, serif" fontWeight="700" fontSize="14" fill="#111">B</text></svg>
            </SquareButton>
            <SquareButton type="button" aria-label="Italic">
              <svg width="16" height="16"><text x="8" y="12.500" textAnchor="middle" fontFamily="Liberation Serif, serif" fontWeight="700" fontStyle="italic" fontSize="14" fill="#111">I</text></svg>
            </SquareButton>
            <SquareButton type="button" aria-label="Rotate">
              <svg width="16" height="16" viewBox="0 0 16 16"><path d="M12.500 11A5.300 5.300 0 1 1 11 4" fill="none" stroke="#4b3fa0" strokeWidth="2.600" /><path d="M14.500 1v7H8z" fill="#4b3fa0" /></svg>
            </SquareButton>
            <SquareButton type="button" aria-label="Glyphs">
              <svg width="16" height="18" viewBox="0 0 16 18">
                <path d="M2 2h9l3 3v11H2z" fill="#cfe2f4" stroke="#556" />
                <text x="8.500" y="14" textAnchor="middle" fontFamily="Liberation Serif, serif" fontWeight="700" fontSize="13" fill="#1c5cb0">T</text>
              </svg>
            </SquareButton>
          </ButtonRow>
        </FormRow>
        <FormRow $h={36}>
          <GroupLabel>Alignment:</GroupLabel>
          <ButtonRow>
            <SquareButton type="button" $active aria-label="Align left"><AlignIcon mode="left" /></SquareButton>
            <SquareButton type="button" aria-label="Align center"><AlignIcon mode="center" /></SquareButton>
            <SquareButton type="button" aria-label="Align right"><AlignIcon mode="right" /></SquareButton>
          </ButtonRow>
        </FormRow>
        <FormRow $h={1} />
        {metrics.map(([name, value]) => (
          <FormRow $h={27} $indent={46} key={name}>
            <FieldLabel htmlFor={name}>{name}:</FieldLabel>
            <NumberInput id={name} defaultValue={value} />
            <Stepper>
              <StepButton type="button" aria-label={`Increase ${name}`}><Chevron up /></StepButton>
              <StepButton type="button" aria-label={`Decrease ${name}`}><Chevron /></StepButton>
            </Stepper>
          </FormRow>
        ))}
        <FormRow $h={27} $indent={105}>
          <SelectBox $w={121}>
            <Select aria-label="Direction"><option></option></Select>
            <SelectKnob />
          </SelectBox>
        </FormRow>
      </Form>
      <FormTrack><Thumb $h={207} /></FormTrack>
      <HTrack><HThumb /></HTrack>
    </FormArea>
  </DockPanel>
);

const LayersPanel = () => (
  <DockPanel>
    <DockTitle $tall>LAYERS</DockTitle>
    <LayerTable>
      <colgroup>
        <Column $w={27} />
        <Column $w={12} />
        <Column $w={20} />
        <Column $w={34} />
        <Column />
        <Column $w={16} />
      </colgroup>
      <thead>
        <HeadRow>
          <th colSpan={3}><HeadIcons><EyeIcon /><LockIcon /></HeadIcons></th>
          <HeadName colSpan={2}>
            <HeadNameBar>
              Layer Name
              <button aria-label="Layer options">
                <svg width="14" height="9" viewBox="0 0 14 9"><path d="M0 3h4L2 5.500zM5 .5h9v1H5zM5 3h9v1H5zM5 5.500h9v1H5zM5 8h9v1H5z" fill="#2e2e2e" /></svg>
              </button>
            </HeadNameBar>
          </HeadName>
          <th />
        </HeadRow>
      </thead>
      <tbody>
        <LayerRow>
          <EyeCell><EyeToggle aria-label="Toggle visibility"><EyeIcon /></EyeToggle></EyeCell>
          <Cell><Dot /></Cell>
          <ColorCell><ColorBar $color="#5be53c" /></ColorCell>
          <Cell><Preview>Front Adri</Preview></Cell>
          <Cell>
            <LayerName>
              <Twirl />
              <svg width="16" height="15" viewBox="0 0 16 15">
                <path d="M1 1h14v8l-5 5H1z" fill="#f7f0c0" stroke="#222" strokeWidth="1.300" />
                <path d="M10 14v-5h5" fill="#fffde8" stroke="#222" />
                <text x="6.500" y="11" textAnchor="middle" fontFamily="Liberation Serif, serif" fontWeight="700" fontSize="11" fill="#111">T</text>
              </svg>
              Front_Ad
            </LayerName>
          </Cell>
          <GutterCell />
        </LayerRow>
        <LayerRow>
          <EyeCell><EyeToggle aria-label="Toggle visibility"><EyeIcon /></EyeToggle></EyeCell>
          <Cell><Dot /></Cell>
          <ColorCell><ColorBar $color="#a91116" /></ColorCell>
          <Cell><Preview /></Cell>
          <Cell>
            <LayerName>
              <Twirl><svg width="9" height="10" viewBox="0 0 9 10"><path d="M1 1l7 4-7 4z" fill="#6c6f7a" /></svg></Twirl>
              <svg width="16" height="15" viewBox="0 0 16 15">
                <path d="M1 3.500h2L4 1.500h4l1 2h6v10H1z" fill="#f5e9ae" stroke="#222" strokeWidth="1.200" />
                <text x="8" y="12" textAnchor="middle" fontFamily="Liberation Sans, sans-serif" fontWeight="700" fontSize="9" fill="#111">G</text>
              </svg>
              &lt;group&gt;
            </LayerName>
          </Cell>
          <GutterCell />
        </LayerRow>
      </tbody>
    </LayerTable>
    <EmptyList />
    <LayerActions>
      <SquareButton aria-label="New group">
        <svg width="18" height="16" viewBox="0 0 18 16">
          <path d="M6 4l1-2h4l1 2h4v9H6z" fill="#f3eebd" stroke="#333" />
          <path d="M1 8.500h7M4.500 5v7" stroke="#26306c" strokeWidth="1.500" />
        </svg>
      </SquareButton>
      <SquareButton aria-label="Delete layer">
        <svg width="14" height="16" viewBox="0 0 14 16">
          <path d="M1 3.500h12M5 3V1.500h4V3" fill="none" stroke="#333" strokeWidth="1.600" />
          <path d="M2 5.500h10l-1 9.500H3z" fill="#4c4c4c" stroke="#2a2a2a" />
          <path d="M5 7v6M7 7v6M9 7v6" stroke="#d5d5d5" strokeWidth=".9" />
        </svg>
      </SquareButton>
    </LayerActions>
  </DockPanel>
);

export default function App() {
  return (
    <>
      <GlobalStyle />
      <Screen>
        <MenuBar>
          <AppleButton aria-label="Apple menu"><AppleLogo /></AppleButton>
          <MenuItem $bold>Sure Cuts A Lot 4 Pro</MenuItem>
          {menus.map((m) => <MenuItem key={m}>{m}</MenuItem>)}
        </MenuBar>
        <Window>
          <TitleBar>
            <Lights>
              <Light $color="#db4f57" aria-label="Close" />
              <Light $color="#e5b33f" aria-label="Minimize" />
              <Light $color="#5acb45" aria-label="Zoom window" />
            </Lights>
            <Title>Sure Cuts A Lot 4 Pro: Untitled</Title>
          </TitleBar>
          <Toolbar>
            {toolbarGroups.map((group) => (
              <ToolGroup key={group[0][0]}>
                {group.map(([name, icon]) => (
                  <ToolbarButton key={name} disabled={name === 'Paste' || name === 'Redo'}>{icon}{name}</ToolbarButton>
                ))}
              </ToolGroup>
            ))}
          </Toolbar>
          <OptionsBar />
          <Body>
            <ToolColumn>
              {toolGroups.map((group, i) => (
                <React.Fragment key={group[0]}>
                  {i > 0 && <ToolRule />}
                  {group.map((name) => (
                    <ToolButton key={name} aria-label={name} $active={name === 'Text'} $more={withMore.includes(name)}>
                      <Mid>{tools[name]}</Mid>
                    </ToolButton>
                  ))}
                </React.Fragment>
              ))}
            </ToolColumn>
            <Document>
              <TabStrip>
                <PageTab>
                  <TabName>Page 1<Swatch /></TabName>
                  <TabClose aria-label="Close page">
                    <svg width="14" height="14" viewBox="0 0 14 14"><circle cx="7" cy="7" r="6.500" fill="#7e7e7e" /><path d="M4.500 4.500l5 5M9.500 4.500l-5 5" stroke="#fff" strokeWidth="1.900" /></svg>
                  </TabClose>
                </PageTab>
                <TabAdd aria-label="Add page">
                  <svg width="14" height="14" viewBox="0 0 14 14"><circle cx="7" cy="7" r="6.500" fill="#4dba31" stroke="#3a9624" /><path d="M7 3.500v7M3.500 7h7" stroke="#fff" strokeWidth="2" /></svg>
                </TabAdd>
              </TabStrip>
              <CanvasGrid>
                <Corner />
                <RulerTop><TopRuler /></RulerTop>
                <VScroll><Thumb $h={173} /></VScroll>
                <RulerLeft><LeftRuler /></RulerLeft>
                <Workspace><Drawing /></Workspace>
                <BottomTrack />
              </CanvasGrid>
            </Document>
            <SplitBar />
            <Docks>
              <Dock>
                <TextPanel />
                <DockRail>
                  <RailButton aria-label="Document"><Rail><path d="M7 4h14l7 7v20H7z" fill="#6d6b58" /><path d="M5 2h15l7 7v20H5z" fill="#f7f5f2" stroke="#8b8a80" /><path d="M20 2v7h7z" fill="#cfccc6" stroke="#6d6d66" /></Rail></RailButton>
                  <RailButton aria-label="Position"><Rail><MoveArrows fill="#22211e" /></Rail></RailButton>
                  <RailButton aria-label="Fill and stroke">
                    <Rail>
                      <path d="M16 2C7 2 2 8 2 16c0 9 7 14 14 14 4 0 5-2 4-4s0-4 3-4 7 0 7-6C30 7 24 2 16 2z" fill="#f1dcae" stroke="#77613a" strokeWidth="1.400" />
                      <circle cx="13" cy="7" r="3" fill="#c63b2c" /><circle cx="20" cy="9" r="3" fill="#e8ca3c" /><circle cx="24" cy="14" r="3" fill="#7cb844" /><circle cx="7.500" cy="13" r="3" fill="#8a3f8e" /><circle cx="10" cy="20" r="3" fill="#4a8fc8" /><circle cx="17" cy="24" r="2.800" fill="#6a4c34" />
                    </Rail>
                  </RailButton>
                  <RailButton aria-label="Settings">
                    <Rail>
                      <path d="M3 26L16 13q-1-6 3-9 3-2 6-1l-4 4 1 4 4 1 4-4q1 5-2 8-3 3-8 2L8 30q-3 2-5 0t0-4z" fill="#a9a9a3" stroke="#4c4b45" strokeWidth="1.300" />
                      <path d="M5 27L19 13" stroke="#eee" strokeWidth="1.400" />
                    </Rail>
                  </RailButton>
                  <RailButton $active aria-label="Text panel">
                    <Rail>
                      <rect x="2" y="2" width="29" height="29" rx="3" fill="#77756a" />
                      <rect x="1" y="1" width="29" height="29" rx="3" fill="#f2f1ee" stroke="#85837a" />
                      <path d="M8 4l5 7H3z" fill="#2c2c2c" />
                      <text x="8" y="25" textAnchor="middle" fontFamily="Liberation Sans, sans-serif" fontSize="14" fill="#1c1c1c" stroke="#1c1c1c" strokeWidth=".5">A</text>
                      <text x="20.500" y="25" textAnchor="middle" fontFamily="Liberation Sans, sans-serif" fontSize="23" fill="#1c1c1c">A</text>
                    </Rail>
                  </RailButton>
                </DockRail>
              </Dock>
              <Splitter><Grip /></Splitter>
              <Dock $grow>
                <LayersPanel />
                <DockRail>
                  <RailButton $active aria-label="Layers panel">
                    <Rail>
                      <g fill="#f5f5f3" stroke="#2a2a28" strokeWidth="1.500">
                        <path d="M1 20l15-8 15 8-15 8z" /><path d="M1 16l15-8 15 8-15 8z" /><path d="M1 12l15-8 15 8-15 8z" />
                      </g>
                    </Rail>
                  </RailButton>
                  <RailButton aria-label="Help">
                    <Rail>
                      <circle cx="17" cy="17" r="13.500" fill="#7e5a16" />
                      <circle cx="16" cy="16" r="13.500" fill="#dd9a2a" stroke="#a06c14" />
                      <path d="M4 13Q8 4 16 4t12 9q-12 5-24 0z" fill="#f0bd5c" opacity=".6" />
                      <text x="16" y="24" textAnchor="middle" fontFamily="Liberation Sans, sans-serif" fontWeight="700" fontSize="23" fill="#fff">?</text>
                    </Rail>
                  </RailButton>
                </DockRail>
              </Dock>
              <Splitter><Grip /></Splitter>
            </Docks>
          </Body>
        </Window>
      </Screen>
    </>
  );
}
